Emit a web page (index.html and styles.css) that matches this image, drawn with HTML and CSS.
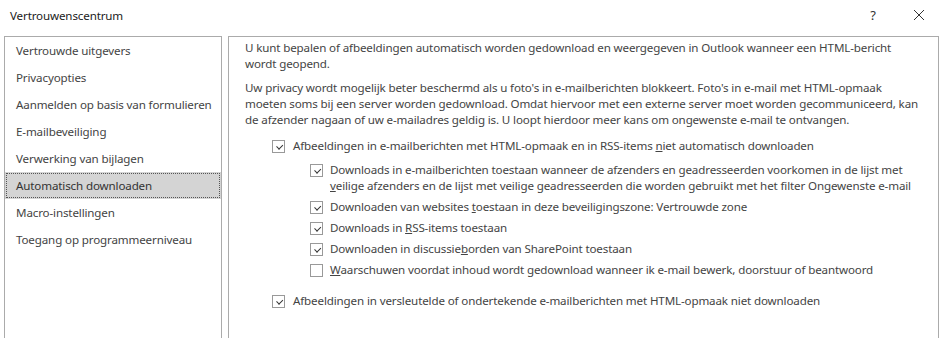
FILE: index.html
```html
<!DOCTYPE html>
<html lang="nl">
<head>
<meta charset="utf-8">
<title>Vertrouwenscentrum</title>
<link rel="stylesheet" href="styles.css">
</head>
<body>
<div class="dialog">
  <div class="titlebar">
    <span class="title">Vertrouwenscentrum</span>
    <span class="help">?</span>
    <span class="close"><svg width="12" height="12" viewBox="0 0 12 12"><path d="M1 1 L11 11 M11 1 L1 11" stroke="#333" stroke-width="1" fill="none"/></svg></span>
  </div>
  <div class="main">
    <ul class="nav">
      <li class="nav-item">Vertrouwde uitgevers</li>
      <li class="nav-item">Privacyopties</li>
      <li class="nav-item">Aanmelden op basis van formulieren</li>
      <li class="nav-item">E-mailbeveiliging</li>
      <li class="nav-item">Verwerking van bijlagen</li>
      <li class="nav-item selected"><span class="focus">Automatisch downloaden</span></li>
      <li class="nav-item">Macro-instellingen</li>
      <li class="nav-item">Toegang op programmeerniveau</li>
    </ul>
    <div class="content">
      <p class="para">U kunt bepalen of afbeeldingen automatisch worden gedownload en weergegeven in Outlook wanneer een HTML-bericht<br>wordt geopend.</p>
      <p class="para">Uw privacy wordt mogelijk beter beschermd als u foto's in e-mailberichten blokkeert. Foto's in e-mail met HTML-opmaak<br>moeten soms bij een server worden gedownload. Omdat hiervoor met een externe server moet worden gecommuniceerd, kan<br>de afzender nagaan of uw e-mailadres geldig is. U loopt hierdoor meer kans om ongewenste e-mail te ontvangen.</p>
      <div class="opt r1"><span class="cb checked"></span><span class="lbl">Afbeeldingen in e-mailberichten met HTML-opmaak en in RSS-items <u>n</u>iet automatisch downloaden</span></div>
      <div class="opt sub r2"><span class="cb checked"></span><span class="lbl">Downloads in e-mailberichten toestaan wanneer de afzenders en geadresseerden voorkomen in de lijst met<br><u>v</u>eilige afzenders en de lijst met veilige geadresseerden die worden gebruikt met het filter Ongewenste e-mail</span></div>
      <div class="opt sub"><span class="cb checked"></span><span class="lbl">Downloaden van websites <u>t</u>oestaan in deze beveiligingszone: Vertrouwde zone</span></div>
      <div class="opt sub"><span class="cb checked"></span><span class="lbl">Downloads in <u>R</u>SS-items toestaan</span></div>
      <div class="opt sub"><span class="cb checked"></span><span class="lbl">Downloaden in discussie<u>b</u>orden van SharePoint toestaan</span></div>
      <div class="opt sub r6"><span class="cb"></span><span class="lbl"><u>W</u>aarschuwen voordat inhoud wordt gedownload wanneer ik e-mail bewerk, doorstuur of beantwoord</span></div>
      <div class="opt"><span class="cb checked"></span><span class="lbl">Afbeeldingen in versleutelde of ondertekende e-mailberichten met HTML-opmaak niet downloaden</span></div>
    </div>
  </div>
</div>
</body>
</html>
```
FILE: styles.css
```css
html, body {
  margin: 0;
  padding: 0;
  background: #fff;
}
body {
  width: 942px;
  height: 338px;
  overflow: hidden;
  font-family: "Noto Sans", "Open Sans", sans-serif;
  font-size: 11.6px;
  letter-spacing: -0.14px;
  color: #444;
}
.dialog {
  display: flex;
  flex-direction: column;
  height: 339px;
}
.titlebar {
  flex: none;
  height: 36px;
  display: flex;
  align-items: center;
  padding: 0 0 6px 10px;
  box-sizing: border-box;
}
.title {
  flex: 1;
  color: #222;
}
.help {
  width: 46px;
  text-align: center;
  font-size: 13px;
  color: #333;
}
.close {
  width: 46px;
  display: flex;
  justify-content: center;
}
.main {
  flex: none;
  display: flex;
  gap: 6px;
  padding-left: 4px;
  padding-right: 3px;
}
.nav {
  flex: none;
  list-style: none;
  margin: 0;
  padding: 0;
  width: 216px;
  height: 301px;
  border: 1px solid #ababab;
}
.nav-item {
  height: 27px;
  line-height: 27px;
  padding-left: 11px;
  white-space: nowrap;
}
.nav-item.selected {
  background: #d4d4d4;
  padding: 1px 1px;
  height: 25px;
  line-height: 23px;
}
.focus {
  display: block;
  border: 1px dotted #555;
  padding-left: 9px;
  color: #333;
}
.content {
  flex: 1;
  height: 298px;
  border: 1px solid #ababab;
  padding: 3px 16px 0 16px;
  white-space: nowrap;
}
.para {
  margin: 0 0 8px 0;
  line-height: 16px;
}
.opt {
  display: flex;
  align-items: flex-start;
  line-height: 16px;
  margin-left: 27px;
  margin-bottom: 5px;
}
.opt.r1 { margin-top: 10px; margin-bottom: 8px; }
.opt.r6 { margin-bottom: 15px; }
.opt.sub { margin-left: 65px; }
.cb {
  flex: none;
  width: 11px;
  height: 11px;
  border: 1px solid #999;
  margin-top: 2px;
  margin-right: 7px;
  position: relative;
}
.opt.r1 .cb, .opt:last-child .cb { margin-right: 8px; }
.cb.checked::after {
  content: "";
  position: absolute;
  left: 3px;
  top: 1px;
  width: 5px;
  height: 3px;
  border-left: 1px solid #333;
  border-bottom: 1px solid #333;
  transform: rotate(-45deg) translate(-1px, 2px);
}
.lbl u {
  text-decoration: underline;
}
```
